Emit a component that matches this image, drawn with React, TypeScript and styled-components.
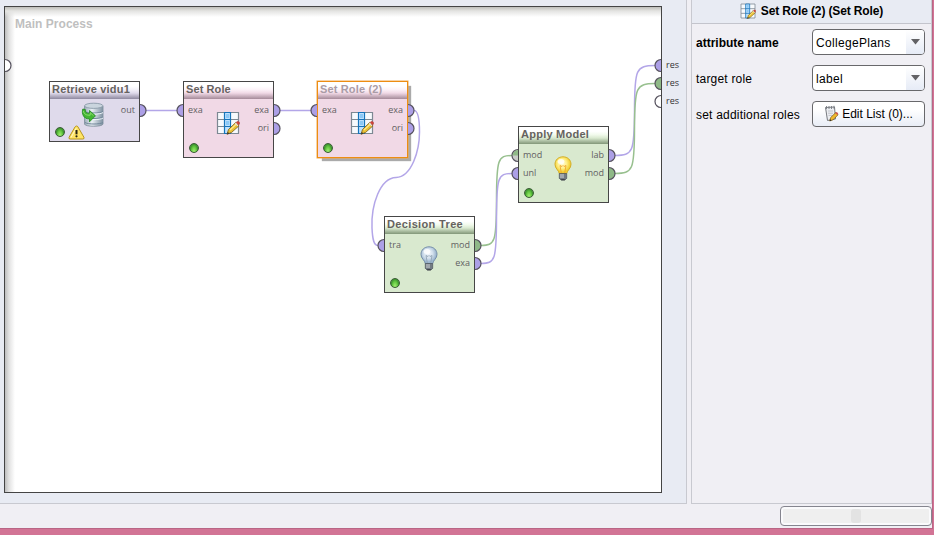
import React from "react";
import styled, { createGlobalStyle } from "styled-components";

const GlobalStyle = createGlobalStyle`
  * { box-sizing: border-box; }
  html, body { margin: 0; overflow: hidden; }
  body { font-family: "Liberation Sans", Arial, sans-serif; font-size: 12px; color: #000; }
`;

const Frame = styled.div`
  width: 934px;
  height: 535px;
  background: #d27495;
  padding-right: 1px;
  overflow: hidden;
`;

const AppWindow = styled.div`
  width: 933px;
  height: 529px;
  background: #f0eff4;
  border: solid #b96585;
  border-width: 0 1px 1px 0;
`;

const Main = styled.div`
  height: 504px;
  display: flex;
  gap: 4px;
`;

const Workspace = styled.section`
  position: relative;
  width: 687px;
  padding: 6px 0 0 4px;
  background: #e8ebf3;
  border-right: 1px solid #c8c9d0;
  border-bottom: 1px solid #c8c9d0;
`;

const Canvas = styled.div`
  width: 658px;
  height: 487px;
  border: 1px solid #444;
  background:
    linear-gradient(180deg, #bebeba 0, #e4e4e2 4px, rgba(255, 255, 255, 0) 10px),
    linear-gradient(90deg, #bebebe 0, #e2e2e2 4px, #fff 10px);
`;

const CanvasTitle = styled.div`
  padding: 10px 0 0 10px;
  font: bold 12px/14px "Liberation Sans", Arial, sans-serif;
  letter-spacing: 0.03px;
  color: #bfbfbf;
`;

const Overlay = styled.svg`
  position: absolute;
  left: 0;
  top: 0;
  width: 686px;
  height: 503px;
  pointer-events: none;
`;

type Tone = "lilac" | "pink" | "green";
const tones: Record<Tone, { body: string; dark: string; light: string }> = {
  lilac: { body: "#dfdaeb", dark: "#8e889f", light: "#f2f0f8" },
  pink: { body: "#f1d9e6", dark: "#a58a99", light: "#fcf2f8" },
  green: { body: "#d9e9cf", dark: "#819678", light: "#f2faed" },
};

const NodeBox = styled.article<{ $x: number; $y: number; $h: number; $tone: Tone; $selected?: boolean }>`
  position: absolute;
  left: ${(p) => p.$x}px;
  top: ${(p) => p.$y}px;
  width: 91px;
  height: ${(p) => p.$h}px;
  border: 1px solid ${(p) => (p.$selected ? "#ed8d12" : "#464646")};
  background: ${(p) => tones[p.$tone].body};
  box-shadow: ${(p) => (p.$selected ? "0 0 0 .5px #efa850, 4px 4px 1px -1px #aaa" : "none")};
`;

const NodeTitle = styled.header<{ $tone: Tone; $selected?: boolean; $spacing: number }>`
  height: 17px;
  padding-left: 2px;
  font: bold 11px/15px "Liberation Sans", Arial, sans-serif;
  letter-spacing: ${(p) => p.$spacing}px;
  white-space: nowrap;
  color: ${(p) => (p.$selected ? "#aa9ca6" : "#66625f")};
  background: linear-gradient(#fff 0, #fff 25%, ${(p) => tones[p.$tone].light} 45%, ${(p) => tones[p.$tone].body} 65%, ${(p) => tones[p.$tone].dark} 100%);
`;

const Ports = styled.div`
  display: flex;
  justify-content: space-between;
  padding: 2px 4px 0 4px;
`;

const PortColumn = styled.div<{ $right?: boolean }>`
  text-align: ${(p) => (p.$right ? "right" : "left")};
  font: 9px/18px "Open Sans", sans-serif;
  color: #625e62;
`;

const NodeIcon = styled.span<{ $x: number; $y: number }>`
  position: absolute;
  left: ${(p) => p.$x}px;
  top: ${(p) => p.$y}px;
  display: flex;
`;

const StatusDot = styled.i`
  position: absolute;
  left: 5px;
  bottom: 4px;
  width: 10px;
  height: 10px;
  border: 1px solid #3b5c36;
  border-radius: 50%;
  background: radial-gradient(ellipse at 50% 90%, #a5ef75 0, #62c63f 45%, #3d942f 70%, #94c08c 100%);
`;

const ResLabels = styled.div`
  position: absolute;
  left: 666px;
  top: 56px;
  font: 9px/18px "Open Sans", sans-serif;
  color: #333;
`;

const Properties = styled.aside`
  width: 241px;
  border: solid #c8c9d0;
  border-width: 0 1px 1px;
  background: #f0eff4;
`;

const PanelHeader = styled.header`
  height: 24px;
  padding: 0 0 2px;
  display: flex;
  align-items: center;
  justify-content: center;
  gap: 5px;
  background: #e8ebf3;
  border-bottom: 1px solid #c3c4cc;
  font-weight: bold;
  letter-spacing: -0.13px;
`;

const Form = styled.div`
  display: grid;
  grid-template-columns: 116px 113px;
  grid-auto-rows: 26px;
  row-gap: 10px;
  padding: 5px 0 0 4px;
  align-items: center;
`;

const Label = styled.label<{ $strong?: boolean }>`
  font-weight: ${(p) => (p.$strong ? "bold" : "normal")};
  letter-spacing: ${(p) => (p.$strong ? "0" : "0.2px")};
  padding-top: 1px;
  white-space: nowrap;
`;

const Combo = styled.div`
  height: 26px;
  border: 1px solid #68686b;
  border-radius: 4px;
  background: #fff;
  display: flex;
  justify-content: space-between;
  padding-left: 3px;
  line-height: 26px;
  letter-spacing: 0.32px;
  overflow: hidden;
`;

const ComboArrow = styled.span`
  width: 18px;
  background: linear-gradient(#fff, #e6ebf6);
  display: flex;
  justify-content: center;
  padding-top: 9px;
`;

const EditButton = styled.button`
  height: 26px;
  padding: 0 0 1px;
  border: 1px solid #68686b;
  border-radius: 4px;
  background: linear-gradient(#fff 0, #fff 30%, #e9edf6 100%);
  font: 12px "Liberation Sans", Arial, sans-serif;
  color: #000;
  display: flex;
  align-items: center;
  justify-content: center;
  gap: 3px;
`;

const StatusBar = styled.footer`
  height: 24px;
  display: flex;
  justify-content: flex-end;
  padding-top: 2px;
`;

const Progress = styled.div`
  width: 152px;
  height: 20px;
  border: 1px solid #85858f;
  border-radius: 4px;
  background: #efefef;
  box-shadow: inset 0 0 0 2px #fafafc;
  display: flex;
  justify-content: center;
  align-items: center;
`;

const ProgressMark = styled.i`
  width: 10px;
  height: 14px;
  border-radius: 3px;
  background: #e3e3e3;
`;

function TableIcon({ size = 24 }: { size?: number }) {
  return (
    <svg width={size} height={size} viewBox="0 0 24 24">
      <path d="M1.5 1.5h21v21h-21z" fill="#f7fafd" stroke="#7d8993" strokeWidth="1.2" />
      <path d="M1.5 8.5h21M1.5 15.5h21" stroke="#7d8993" strokeWidth="1.2" />
      <path d="M8.5 1.5h6v21h-6z" fill="#bfe2ff" stroke="#1774ba" strokeWidth="1.2" />
      <path d="M8.5 8.5h6M8.5 15.5h6" stroke="#1774ba" strokeWidth="1.2" />
      <path d="M10 3h3v4h-3zM10 10h3v4h-3z" fill="#8bc9f7" />
      <path d="M11 23.3l1.5-4.8 7.2-7 3.3 3.3-7.5 6.7z" fill="#e9c034" stroke="#795b16" strokeWidth=".8" />
      <path d="M14 19l7-6.5" stroke="#ffe990" strokeWidth="1.2" />
      <path d="M20 11.5l1.5-1.2q2.5 0 2 2.8L22.5 14z" fill="#d63f38" stroke="#a44b43" strokeWidth=".5" />
      <path d="M19.3 12.2l2.6 2.6" stroke="#e4e4e4" strokeWidth="1.2" />
      <path d="M11 23.3l.8-2.4 1.7 1.5z" fill="#333" />
    </svg>
  );
}

function DatabaseIcon() {
  return (
    <svg width="24" height="26" viewBox="0 0 24 26">
      <defs>
        <linearGradient id="metal">
          <stop offset="0" stopColor="#9aabb8" /><stop offset=".4" stopColor="#eaf0f5" /><stop offset="1" stopColor="#7f92a2" />
        </linearGradient>
      </defs>
      <path d="M3.5 4v18c0 3 18.5 3 18.5 0V4" fill="url(#metal)" stroke="#8493a0" strokeWidth=".9" />
      <ellipse cx="12.7" cy="3.8" rx="9.2" ry="2.6" fill="#cad5de" stroke="#8a9aa8" strokeWidth=".9" />
      <path d="M4 9.5c3 2 15 2 18 0M4 15c3 2 15 2 18 0M4 20.5c3 2 15 2 18 0" fill="none" stroke="#71879a" />
      <path d="M4 10.6c3 2 15 2 18 0M4 16.1c3 2 15 2 18 0" fill="none" stroke="#f5faff" strokeWidth=".9" />
      <path d="M1.8 7C.2 12 3 17.3 8.5 17v2.8l6-6-6-5.3v3C5.5 11.5 4 10 4.3 7.5z" fill="#43b633" stroke="#20861f" strokeWidth=".8" />
      <path d="M2.4 9c.5 3.5 3.5 4.4 6.8 4.2v-2.5l3.3 3" fill="none" stroke="#91df70" strokeWidth=".9" />
    </svg>
  );
}

function BulbIcon({ lit }: { lit?: boolean }) {
  const id = lit ? "litGlass" : "coolGlass";
  return (
    <svg width="18" height="25" viewBox="0 0 18 25">
      <defs>
        <radialGradient id={id} cx="45%" cy="40%">
          <stop offset="0" stopColor={lit ? "#fffde1" : "#f4f8fd"} />
          <stop offset=".55" stopColor={lit ? "#fff08a" : "#d5e2ee"} />
          <stop offset="1" stopColor={lit ? "#f1ce31" : "#9cb6cf"} />
        </radialGradient>
      </defs>
      <path d="M9 .8C4.3.8 1 4 1 8.4c0 4 3.6 5.6 4.4 9.3h7.2C13.4 14 17 12.4 17 8.4 17 4 13.7.8 9 .8z" fill={`url(#${id})`} stroke={lit ? "#d3ae2b" : "#768fa9"} />
      <path d="M7.3 17L6 9.5l2 1 1-1 1 1 2-1-1.3 7.5" fill="none" stroke={lit ? "#f0a62d" : "#92a5b6"} strokeWidth=".9" />
      <ellipse cx="7" cy="5.5" rx="3.4" ry="2.5" fill="#fff" opacity=".8" />
      <path d="M5.3 17.5h7.4v4.8L11 24H7l-1.7-1.7z" fill="#737b83" stroke="#4e545b" strokeWidth=".7" />
      <path d="M6 19h4M6 21h4" stroke="#d1d5d8" />
      <path d="M7.2 23.8h3.6" stroke="#303338" />
    </svg>
  );
}

function WarningIcon() {
  return (
    <svg width="17" height="15" viewBox="0 0 17 15">
      <path d="M8.5 1Q9.3.8 10 2l5.9 10.2q.7 1.8-1 1.8H2.1q-1.7 0-1-1.8L7 2q.7-1 1.5-1z" fill="#ffe565" stroke="#b8951c" />
      <path d="M8.2 3.2L3 12.5" stroke="#fff9c9" />
      <path d="M8.5 5v4.3" stroke="#272313" strokeWidth="2" />
      <circle cx="8.5" cy="11.3" r="1.1" fill="#272313" />
    </svg>
  );
}

function EditListIcon() {
  return (
    <svg width="15" height="17" viewBox="0 0 15 17">
      <path d="M1.5 2.5l9-.5 1 12-8 1.5z" fill="#eceef2" stroke="#767a80" />
      <path d="M2.5 1v3M5 1v3M7.5 1v3M10 .8v3" stroke="#777b82" strokeWidth=".9" />
      <path d="M4 6h5M4 8.2h5M4.5 10.4h4" stroke="#b5b8c0" strokeWidth=".8" />
      <path d="M5.7 16l1-3.5 5.1-5 2.3 2.3-5.1 5z" fill="#efb82c" stroke="#755719" strokeWidth=".7" />
      <path d="M11.2 8.2l1-1.3q2 .2 2 2.1l-.9.8z" fill="#ce514b" />
      <path d="M5.7 16l.5-1.7 1.2 1.1z" fill="#222" />
    </svg>
  );
}

type PortProps = { x: number; y: number; side: "left" | "right"; color?: string };
function Port({ x, y, side, color = "#ac9fe6" }: PortProps) {
  return <path d={`M${x} ${y - 6}a6 6 0 0 ${side === "right" ? 1 : 0} 0 12`} fill={color} stroke="#55515d" strokeWidth="1.2" />;
}

type NodeProps = {
  title: string; x: number; y: number; h?: number; tone: Tone; inputs?: string[]; outputs: string[];
  icon: React.ReactNode; iconX?: number; iconY?: number; selected?: boolean; warning?: boolean; spacing?: number;
};
function OperatorNode({ title, x, y, h = 77, tone, inputs = [], outputs, icon, iconX = 32, iconY = 29, selected, warning, spacing = 0.3 }: NodeProps) {
  return (
    <NodeBox $x={x} $y={y} $h={h} $tone={tone} $selected={selected}>
      <NodeTitle $tone={tone} $selected={selected} $spacing={spacing}>{title}</NodeTitle>
      <Ports>
        <PortColumn>{inputs.map((v) => <div key={v}>{v}</div>)}</PortColumn>
        <PortColumn $right>{outputs.map((v) => <div key={v}>{v}</div>)}</PortColumn>
      </Ports>
      <NodeIcon $x={iconX} $y={iconY}>{icon}</NodeIcon>
      <StatusDot />
      {warning && <NodeIcon $x={18} $y={43}><WarningIcon /></NodeIcon>}
    </NodeBox>
  );
}

const violet = "#b3a6e8";
const green = "#98c08f";

function Wires() {
  return (
    <Overlay viewBox="0 0 686 503" fill="none">
      <g strokeWidth="1.5">
        <path d="M146 110.5H177M280 110.5H311" stroke={violet} />
        <path d="M414 110.5C419 110.5 419.5 124 419.5 132C419.5 150 412 177 396 177.5C380 178 371 205 372 228C372.5 240 374 245.5 378 245.5" stroke={violet} />
        <path d="M481 245.5C495 245.5 496.5 242 496.5 200C496.5 159 498 155.5 512 155.5" stroke={green} />
        <path d="M481 263.5C495 263.5 496.5 260 496.5 218C496.5 177 498 173.5 512 173.5" stroke={violet} />
        <path d="M615 155.5C633 155.5 634.5 152 634.5 110C634.5 69 636 65.5 655 65.5" stroke={violet} />
        <path d="M615 173.5C633 173.5 634.5 170 634.5 128C634.5 87 636 83.5 655 83.5" stroke={green} />
      </g>
      <Port x={5} y={65.5} side="right" color="#fff" />
      <Port x={140} y={110.5} side="right" />
      <Port x={183} y={110.5} side="left" />
      <Port x={274} y={110.5} side="right" />
      <Port x={274} y={128.5} side="right" />
      <Port x={317} y={110.5} side="left" />
      <Port x={408} y={110.5} side="right" />
      <Port x={408} y={128.5} side="right" />
      <Port x={384} y={245.5} side="left" />
      <Port x={475} y={245.5} side="right" color="#8fb987" />
      <Port x={475} y={263.5} side="right" />
      <Port x={518} y={155.5} side="left" color="#c9cbc8" />
      <path d="M512.6 155.5a5.4 5.4 0 0 1 5.4-5.4v5.4z" fill="#8fb987" />
      <Port x={518} y={173.5} side="left" />
      <Port x={609} y={155.5} side="right" />
      <Port x={609} y={173.5} side="right" color="#8fb987" />
      <Port x={661} y={65.5} side="left" />
      <Port x={661} y={83.5} side="left" color="#8fb987" />
      <Port x={661} y={101.5} side="left" color="#fff" />
    </Overlay>
  );
}

function SelectBox({ value }: { value: string }) {
  return (
    <Combo>
      {value}
      <ComboArrow><svg width="9" height="6"><path d="M0 0h9L4.5 5.5z" fill="#626265" /></svg></ComboArrow>
    </Combo>
  );
}

export default function App() {
  return (
    <>
      <GlobalStyle />
      <Frame>
        <AppWindow>
          <Main>
            <Workspace>
              <Canvas><CanvasTitle>Main Process</CanvasTitle></Canvas>
              <OperatorNode title="Retrieve vidu1" x={49} y={81} h={61} tone="lilac" outputs={["out"]} icon={<DatabaseIcon />} iconX={31} iconY={20} warning spacing={0.2} />
              <OperatorNode title="Set Role" x={183} y={81} tone="pink" inputs={["exa"]} outputs={["exa", "ori"]} icon={<TableIcon />} spacing={0.1} />
              <OperatorNode title="Set Role (2)" x={317} y={81} tone="pink" inputs={["exa"]} outputs={["exa", "ori"]} icon={<TableIcon />} selected spacing={0.15} />
              <OperatorNode title="Apply Model" x={518} y={126} tone="green" inputs={["mod", "unl"]} outputs={["lab", "mod"]} icon={<BulbIcon lit />} iconX={35} spacing={0.25} />
              <OperatorNode title="Decision Tree" x={384} y={216} tone="green" inputs={["tra"]} outputs={["mod", "exa"]} icon={<BulbIcon />} iconX={35} spacing={0.35} />
              <Wires />
              <ResLabels><div>res</div><div>res</div><div>res</div></ResLabels>
            </Workspace>
            <Properties>
              <PanelHeader><TableIcon size={16} />Set Role (2) (Set Role)</PanelHeader>
              <Form>
                <Label $strong>attribute name</Label><SelectBox value="CollegePlans" />
                <Label>target role</Label><SelectBox value="label" />
                <Label>set additional roles</Label><EditButton><EditListIcon />Edit List (0)...</EditButton>
              </Form>
            </Properties>
          </Main>
          <StatusBar><Progress><ProgressMark /></Progress></StatusBar>
        </AppWindow>
      </Frame>
    </>
  );
}
